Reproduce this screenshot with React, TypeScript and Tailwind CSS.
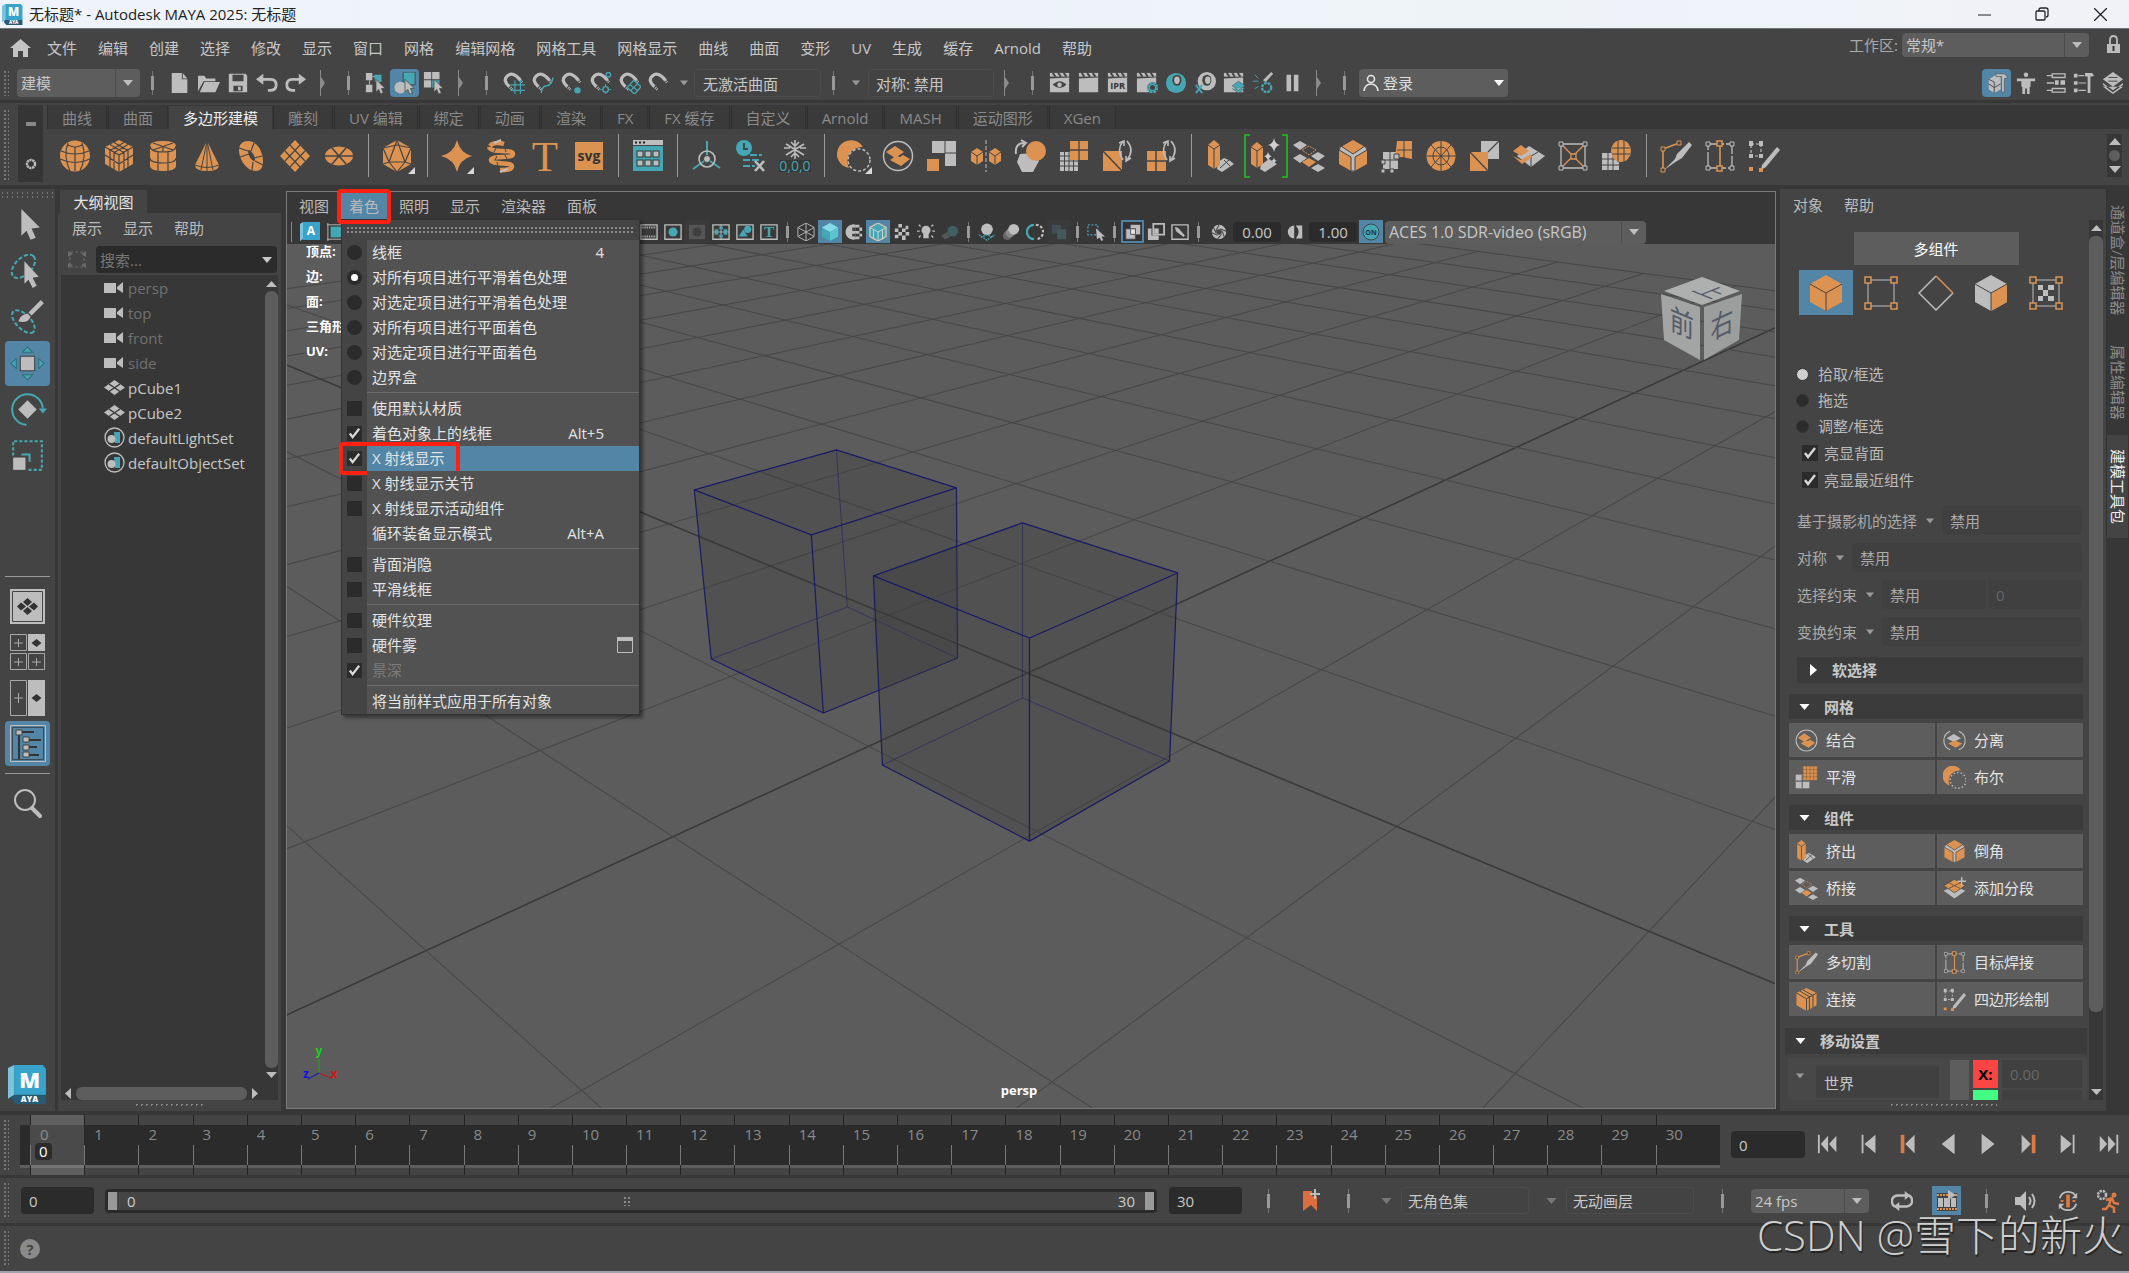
import { ReactNode, useState } from 'react';

const O = '#dc9352';
const G = '#bdbdbd';
const T = '#45a7b3';
const D = '#444444';

type IconProps = { children: ReactNode; size?: number; box?: number };

// Every icon is drawn on a square box and scaled to the wanted size
const Svg = ({ children, size = 32, box = 32 }: IconProps) => (
  <svg width={size} height={size} viewBox={`0 0 ${box} ${box}`} fill="none" className="block shrink-0">
    {children}
  </svg>
);

const MayaLogo = ({ size }: { size: number }) => (
  <Svg size={size} box={38}>
    <path d="M4 28h33v10H8l-4-4z" fill="#255b73" />
    <path d="M0 3l6-3v29l-6 4z" fill="#7cc4dd" />
    <path d="M6 0h28l3 4v25H6z" fill="#38a3cb" />
    <text x="21" y="22" fontSize="21" fontWeight="800" textAnchor="middle" fill="#fff">M</text>
    <text x="21" y="36" fontSize="8" fontWeight="800" textAnchor="middle" fill="#fff">AYA</text>
  </Svg>
);

/* ---------- shelf drawings ---------- */
const shapes = {
  sphere: (
    <>
      <ellipse cx="16" cy="16" rx="15" ry="15.500" fill={O} />
      <path d="M2 11q14 6 28 0M1 19q15 7 30 0M9 5q7 4 14 0M9 3q-5 13 2 28M23 3q5 13-2 28M16 7v24" stroke={D} strokeWidth="1.200" />
    </>
  ),
  cube: (
    <>
      <path d="M16 0l14 7v17l-14 8-14-8V7z" fill={O} />
      <path d="M2 7l14 8 14-8M16 15v17M7 4.500l14 8M11 2.500l14 8M25 4.500l-14 8M21 2.500l-14 8M7 10v17M11 12.500v17M21 12.500v17M25 10v17M2 15l14 9 14-9" stroke={D} strokeWidth="1.200" />
    </>
  ),
  cylinder: (
    <>
      <path d="M3 6q0-5 13-5t13 5v20q0 5-13 5T3 26z" fill={O} />
      <path d="M3 6q0 6 13 6t13-6M3 18q0 5 13 5t13-5M11 11v20M21 11v20M16 6v6M6 3l20 7M26 3L6 10" stroke={D} strokeWidth="1.200" />
    </>
  ),
  cone: (
    <>
      <path d="M16 1l12 24q0 6-12 6T4 25z" fill={O} />
      <path d="M16 1v30M4 25q12 5 24 0M16 1l-6 29M16 1l6 29" stroke={D} strokeWidth="1" />
    </>
  ),
  torus: (
    <>
      <path d="M13 1c9 0 15 10 15 21 0 6-3 9-7 9C12 31 4 20 4 10c0-6 4-9 9-9z" fill={O} />
      <path d="M13 10c3 0 7 5 7 10-1 3-7-2-7-10z" fill={D} />
      <path d="M4 8l9 3M19 3l-3 8M27 16l-8 2M28 25l-8-4M17 30l1-8M5 17l9-3" stroke={D} strokeWidth="1.200" />
    </>
  ),
  plane: (
    <>
      <path d="M16 0l15 16-15 16L1 16z" fill={O} />
      <path d="M6 11l15 16M11 5l15 16M26 11L11 27M21 5L6 21" stroke={D} strokeWidth="1.200" />
    </>
  ),
  disc: (
    <>
      <ellipse cx="16" cy="16" rx="14" ry="9.500" fill={O} />
      <path d="M2 16h28M9 8l14 16M23 8L9 24" stroke={D} strokeWidth="1.600" />
    </>
  ),
  platonic: (
    <>
      <path d="M15 0l14 8v16l-14 8L1 24V8z" fill={O} />
      <path d="M15 0L7 22h16zM1 8l6 14-6 2M29 8l-6 14 6 2M7 22l8 10 8-10M1 8L15 5l14 3" stroke={D} strokeWidth="1.200" />
      <path d="M33 27v7h-7z" fill="#d8d8d8" />
    </>
  ),
  superShape: (
    <>
      <path d="M16 0q3 13 15 16-12 3-15 16Q13 19 0 16 13 13 16 0z" fill={O} />
      <path d="M33 27v7h-7z" fill="#d8d8d8" />
    </>
  ),
  helix: (
    <>
      <path d="M5 6c2-3 8-4 14-2M4 7c2 7 24 1 24 7 0 5-22 1-22 6s21 2 21 6-6 4-12 4" stroke={O} strokeWidth="4.500" />
      <path d="M9 3l7-3M15 32l8-3" stroke={G} strokeWidth="2" />
      <path d="M11 8l-2 4M20 8l1 4M12 16l-2 4M20 15l2 4M12 22l1 4" stroke={D} />
    </>
  ),
  type: <text x="16" y="31" fontSize="43" textAnchor="middle" fill={O} className="font-['Liberation_Serif']">T</text>,
  svgTool: (
    <>
      <rect x="2" y="2" width="28" height="28" fill={O} />
      <text x="16" y="21" fontSize="14" fontWeight="700" textAnchor="middle" fill="#333">svg</text>
    </>
  ),
  contentBrowser: (
    <>
      <rect x="1" y="0" width="30" height="5" fill={G} />
      <path d="M3 2.500h2M7 2.500h2M11 2.500h2" stroke="#222" strokeWidth="2" />
      <rect x="1" y="6" width="30" height="25" fill={T} />
      {[5, 13, 21].map(x => [11, 20].map(y => <rect key={`${x}-${y}`} x={x} y={y} width="6" height="6" fill={G} stroke="#333" />))}
    </>
  ),
  pivot: (
    <>
      <path d="M16 1v14M16 19L2 29M16 19l13 9" stroke={T} strokeWidth="2" />
      <circle cx="16" cy="19" r="8" stroke={G} strokeWidth="1.600" />
      <circle cx="16" cy="19" r="3.500" fill={G} stroke={D} />
    </>
  ),
  history: (
    <>
      <circle cx="9" cy="8" r="8" fill={T} />
      <path d="M9 3v6h4" stroke={D} strokeWidth="2" />
      <path d="M15 15h12M8 20h18M8 26h12" stroke={T} strokeWidth="2" strokeDasharray="7 2" />
      <path d="M20 21l9 10M29 21l-9 10" stroke={G} strokeWidth="2.600" />
    </>
  ),
  freeze: (
    <>
      <path d="M0 20h32v12H0z" fill="#383838" />
      <path d="M16 0v19M7 4l18 11M25 4L7 15M12 2l4 4 4-4M12 17l4-4 4 4M5 8l6 0M27 8l-6 0" stroke={G} strokeWidth="1.600" />
      <text x="16" y="31" fontSize="14" textAnchor="middle" fill={T}>0,0,0</text>
    </>
  ),
  boolean: (
    <>
      <path d="M25 7A14 14 0 1 0 11 28C6 16 14 7 25 7z" fill={O} />
      <circle cx="21" cy="20" r="11" stroke={G} strokeWidth="1.500" strokeDasharray="3 2" />
      <path d="M34 27v7h-7z" fill="#d8d8d8" />
    </>
  ),
  booleanSmall: (
    <>
      <path d="M25 6A14 14 0 1 0 9 27C5 15 13 6 25 6z" fill={O} />
      <circle cx="21" cy="20" r="11" stroke={G} strokeWidth="2" strokeDasharray="2 3" />
    </>
  ),
  combine: (
    <>
      <circle cx="16" cy="16" r="14.500" stroke={G} strokeWidth="1.500" />
      <path d="M4 12l9-6 9 6-9 6zM8 20l6-4 4 1 3-2 7 4-9 7z" fill={O} />
    </>
  ),
  separate: (
    <>
      <path d="M10 3A14 14 0 0 0 10 29M22 3a14 14 0 0 1 0 26" stroke={G} strokeWidth="1.500" />
      <path d="M5 13l10-6 10 6-10 5z" fill={G} />
      <path d="M7 20l9-4 11 4-9 6z" fill={O} />
    </>
  ),
  extract: (
    <>
      <path d="M6 1h24v25H19V13H6z" fill={G} />
      <path d="M19 1v12h11" stroke={D} />
      <rect x="1" y="19" width="12" height="12" fill={O} />
    </>
  ),
  mirror: (
    <>
      <path d="M7 8l6 4v9l-6 4-6-4v-9zM25 8l6 4v9l-6 4-6-4v-9z" fill={O} />
      <path d="M1 12l6 4 6-4M7 16v9M19 12l6 4 6-4M25 16v9" stroke={D} />
      <path d="M16 0v32" stroke={G} strokeDasharray="4 2" />
    </>
  ),
  remesh: (
    <>
      <path d="M6 14l14-1 5 8-6 11H8L3 22z" fill={G} />
      <circle cx="22" cy="11" r="10" fill={O} />
      <path d="M2 14C1 7 4 3 10 3M7 0l5 3-4 4" stroke={G} strokeWidth="2" />
    </>
  ),
  smooth: (
    <>
      <path d="M2 12h18v19H2z" fill={G} />
      <path d="M6.500 12v19M11 12v19M15.500 12v19M2 16h18M2 21h18M2 26h18" stroke={D} />
      <path d="M12 1h18v19H12z" fill={O} />
      <path d="M21 1v19M12 10h18" stroke={D} strokeWidth="1.300" />
    </>
  ),
  smoothSmall: (
    <>
      <path d="M1 12h19v19H1z" fill={G} />
      <path d="M10 12v19M1 21h19" stroke="#5d5d5d" strokeWidth="1.500" />
      <path d="M11 0h20v20H11z" fill={O} stroke="#5d5d5d" />
      <path d="M16 0v20M21 0v20M26 0v20M11 5h20M11 10h20M11 15h20" stroke="#8a5a30" strokeWidth=".8" />
    </>
  ),
  triangulate: (
    <>
      <path d="M1 11h19v20H1z" fill={O} />
      <path d="M1 11l19 20" stroke={D} strokeWidth="1.500" />
      <path d="M21 1q-7 9 0 19M25 1q8 9 0 19M17 3l5-2v5M29 18l-5 3v-5" stroke={G} strokeWidth="1.600" />
    </>
  ),
  quadrangulate: (
    <>
      <path d="M1 11h19v20H1z" fill={O} />
      <path d="M10 11v20M1 21h19" stroke={D} strokeWidth="1.500" />
      <path d="M21 1q-7 9 0 19M25 1q8 9 0 19M17 3l5-2v5M29 18l-5 3v-5" stroke={G} strokeWidth="1.600" />
    </>
  ),
  extrude: (
    <>
      <path d="M13 22l6-4 5 2 5 4-12 8-5-3z" fill={G} />
      <path d="M19 20l6 6M24 20l-9 8" stroke={D} />
      <path d="M9 0l6 5v20l-6 4-6-4V5z" fill={O} />
      <path d="M3 5l6 4 6-4M9 9v20" stroke={D} />
    </>
  ),
  smartExtrude: (
    <>
      <path d="M1-5h-5v42h5M33-5h5v42h-5" stroke="#20c020" strokeWidth="1.600" />
      <path d="M12 25l8-6 8 5-12 8-5-3z" fill={G} />
      <path d="M8 2l6 5v17l-6 4-6-4V7z" fill={O} />
      <path d="M2 7l6 4 6-4M8 11v17" stroke={D} />
      <path d="M25-2q1 6 6 7-5 1-6 7-1-6-6-7 5-1 6-7zM19 12q1 4 4 4-3 1-4 5-1-4-4-5 3 0 4-4zM25 17q0 3 3 4-3 0-3 4 0-4-3-4 3-1 3-4z" fill="#d0d0d0" />
    </>
  ),
  bridge: (
    <>
      <path d="M0 5l7-4 7 4-7 5zM0 18l7-4 7 4-7 5zM18 16l7-4 7 4-7 5zM18 28l7-4 7 4-7 4z" fill={G} />
      <path d="M9 22l7-4 7 4-7 5z" fill={O} />
      <path d="M9 10l7-4 7 4-7 5z" stroke={O} strokeDasharray="2 1" />
    </>
  ),
  bevel: (
    <>
      <path d="M16 0l14 8v16l-14 8-14-8V8z" fill={O} />
      <path d="M2 10l2-4 12 8 12-8 2 4-12 7v14h-4V17z" fill={G} stroke={D} />
    </>
  ),
  deformer: (
    <>
      <path d="M2 12h15v17H2z" fill={G} />
      <path d="M16 1h15v18l-10-2-7 1z" fill={O} />
      <path d="M2 20h15M9 12v17M23 1v17M16 10h15" stroke={D} />
      <path d="M0 20h4v4H0zM0 29h4v4H0zM9 29h4v4H9zM13 14h5v5h-5z" stroke={D} fill={G} />
    </>
  ),
  circularize: (
    <>
      <ellipse cx="16" cy="16" rx="14.500" ry="15" fill={O} />
      <ellipse cx="16" cy="16" rx="8" ry="9" stroke={D} />
      <path d="M16 1v30M1.500 16h29M6 5l20 22M26 5L6 27" stroke={D} />
    </>
  ),
  fill: (
    <>
      <path d="M12 1h18v18H12z" fill={G} />
      <path d="M1 12h18v19H1z" fill={O} />
      <path d="M1 12l18 19M19 12L30 1" stroke={D} strokeWidth="1.300" />
    </>
  ),
  poke: (
    <>
      <path d="M16 6l16 10-14 11L4 16z" fill={G} />
      <path d="M10 21l15-9M18 27V17" stroke={D} />
      <path d="M0 11l8-6 8 6-8 5zM0 16l8 4 10-6v4l-9 6z" fill={O} />
    </>
  ),
  lattice: (
    <>
      <path d="M4 4h24v24H4z" stroke={G} strokeWidth="1.300" />
      <path d="M5 5l22 22M27 5L5 27" stroke={O} strokeWidth="1.300" />
      <path d="M14 14h5v5h-5z" fill={D} stroke={O} strokeWidth="1.300" />
      <path d="M2 2h4v4H2zM26 2h4v4h-4zM2 26h4v4H2zM26 26h4v4h-4z" fill={D} stroke={G} />
    </>
  ),
  shrinkwrap: (
    <>
      <path d="M1 13h17v17H1z" fill={G} />
      <path d="M7 13v17M12 13v17M1 19h17M1 25h17" stroke={D} />
      <ellipse cx="20" cy="11" rx="10" ry="11" fill={O} />
      <path d="M11 8h18M11 14h18M17 0v22M23 0v22" stroke={D} />
    </>
  ),
  multiCut: (
    <>
      <path d="M3 29V9L19 3" stroke={O} strokeWidth="1.600" />
      <path d="M1 7h4v4H1zM17 1h4v4h-4zM1 28h4v4H1z" fill={D} stroke={O} />
      <path d="M29 2l3 3-10 13-5 3-2-2 2-5zM15 19l2 2L4 30z" fill={G} />
    </>
  ),
  targetWeld: (
    <>
      <path d="M4 4h24v24H4z" stroke={G} strokeWidth="1.300" strokeDasharray="16 2" />
      <path d="M16 4v24" stroke={O} strokeWidth="1.600" />
      <path d="M13 1h5v5h-5zM13 26h5v5h-5z" fill={D} stroke={O} strokeWidth="1.500" />
      <path d="M2 2h4v4H2zM26 2h4v4h-4zM2 26h4v4H2zM26 26h4v4h-4z" fill={D} stroke={G} />
    </>
  ),
  quadDraw: (
    <>
      <path d="M3 4h10v12H3z" stroke={G} strokeWidth="1.200" strokeDasharray="3 2" />
      <path d="M1 1h4v5H1zM11 1h4v5h-4zM1 14h4v4H1zM11 14h4v4h-4z" fill={G} />
      <path d="M29 7l3 3-14 17-5 3 1-5z" fill={G} />
      <path d="M1 27h4v4H1zM11 28h4v4h-4z" fill={O} />
    </>
  ),
  addDivision: (
    <>
      <path d="M1 19l15-7 15 7-15 11z" fill={G} />
      <path d="M1 12l15-9 15 9-15 10z" fill={O} stroke={D} />
      <path d="M8 8l16 8M24 8L8 16" stroke={D} />
      <path d="M26 0v12M20 6h12" stroke={G} strokeWidth="2" />
    </>
  ),
  connect: (
    <>
      <path d="M16 0l14 7v17l-14 8-14-8V7z" fill={O} />
      <path d="M2 7l14 8 14-8M16 15v17M20 13v17M25 10v17M7 4.500l14 8M11 2.500l14 8" stroke={D} strokeWidth="1.300" />
    </>
  ),
};

type ShapeName = keyof typeof shapes;

const shelfGroups: ShapeName[][] = [
  ['sphere', 'cube', 'cylinder', 'cone', 'torus', 'plane', 'disc'],
  ['platonic'],
  ['superShape', 'helix', 'type', 'svgTool'],
  ['contentBrowser'],
  ['pivot', 'history', 'freeze'],
  ['boolean', 'combine', 'extract', 'mirror', 'remesh', 'smooth', 'triangulate', 'quadrangulate'],
  ['extrude', 'smartExtrude', 'bridge', 'bevel', 'deformer', 'circularize', 'fill', 'poke', 'lattice', 'shrinkwrap'],
  ['multiCut', 'targetWeld', 'quadDraw'],
];

/* ---------- small pieces ---------- */
const Grip = () => (
  <div className="w-[6px] shrink-0 self-stretch my-1 ml-[3px] bg-[radial-gradient(#777_1px,transparent_1px)] bg-[size:4px_4px]" />
);

const Sep = () => (
  <span className="relative mx-[12px] h-6 w-px shrink-0 bg-[#777] before:absolute before:-left-px before:top-[5px] before:h-[14px] before:w-[3px] before:bg-[#999]" />
);

const Chevron = () => (
  <svg width="6" height="26" viewBox="0 0 6 26" className="mx-[10px] shrink-0"><path d="M0 0h1v7l4 6-4 6v7H0z" fill="#8a8a8a" /></svg>
);

const Down = ({ color = '#bdbdbd', w = 10 }: { color?: string; w?: number }) => (
  <svg width={w} height="6" viewBox="0 0 10 6" className="shrink-0"><path d="M0 0h10L5 6z" fill={color} /></svg>
);

const ToolBtn = ({ label, active, children }: { label: string; active?: boolean; children: ReactNode }) => (
  <button
    aria-label={label}
    className={`flex h-7 w-[29px] shrink-0 items-center justify-center rounded-sm ${active ? 'bg-[#5285a6]' : ''}`}
  >
    <Svg size={22} box={24}>{children}</Svg>
  </button>
);

const Select = ({ label, value, className }: { label: string; value: string; className: string }) => (
  <div className={`relative shrink-0 ${className}`}>
    <select aria-label={label} className="h-full w-full appearance-none rounded-sm bg-[#5d5d5d] pl-1 leading-5 text-[#c8c8c8] outline-none">
      <option>{value}</option>
    </select>
    <span className="pointer-events-none absolute inset-y-0 right-0 flex w-[25px] items-center justify-center border-l border-[#4c4c4c]"><Down /></span>
  </div>
);

const Tick = () => (
  <svg viewBox="0 0 16 16" className="pointer-events-none absolute inset-0 hidden size-full peer-checked:block"><path d="M3 8l3 4 7-9" stroke="#d8d8d8" strokeWidth="2.400" fill="none" /></svg>
);

/* ---------- title and menus ---------- */
const TitleBar = () => (
  <header className="flex h-[29px] shrink-0 items-center border-b border-[#70757a] bg-linear-to-r from-[#eff3fb] via-[#edf4f8] to-[#f1f2f8] pl-[2px] text-[#222]">
    <MayaLogo size={21} />
    <h1 className="ml-[6px] flex-1 leading-5">无标题* - Autodesk MAYA 2025: 无标题</h1>
    <button aria-label="最小化" className="flex h-7 w-[58px] items-center justify-center"><svg width="13" height="13" stroke="#222"><path d="M0 7h13" /></svg></button>
    <button aria-label="还原" className="flex h-7 w-[58px] items-center justify-center">
      <svg width="14" height="14" fill="none" stroke="#222" strokeWidth="1.300"><rect x="1" y="4" width="9" height="9" rx="1" /><path d="M4 4V3q0-2 2-2h5q2 0 2 2v5q0 2-2 2" /></svg>
    </button>
    <button aria-label="关闭" className="flex h-7 w-[58px] items-center justify-center"><svg width="13" height="13" stroke="#222" strokeWidth="1.300"><path d="M0 0l13 13M13 0L0 13" /></svg></button>
  </header>
);

const mainMenus = ['文件', '编辑', '创建', '选择', '修改', '显示', '窗口', '网格', '编辑网格', '网格工具', '网格显示', '曲线', '曲面', '变形', 'UV', '生成', '缓存', 'Arnold', '帮助'];

const MenuBar = () => (
  <nav className="flex h-[37px] shrink-0 items-center">
    <a href="#home" aria-label="主页" className="ml-[10px] mr-4">
      <svg width="21" height="18" viewBox="0 0 21 18"><path d="M10.500 0L21 9h-3v9h-5v-6H8v6H3V9H0z" fill="#c4c4c4" /></svg>
    </a>
    <div className="flex flex-1 gap-[21px]">
      {mainMenus.map(m => <button key={m}>{m}</button>)}
    </div>
    <span className="mb-[6px] mr-1 text-[#aaa]">工作区:</span>
    <Select label="工作区" value="常规*" className="mb-[6px] h-6 w-[187px]" />
    <button aria-label="锁定" className="mb-[6px] ml-[18px] mr-[9px]">
      <svg width="13" height="19" viewBox="0 0 13 19"><path d="M3 9V5q0-4 3.500-4T10 5v4" stroke={G} strokeWidth="1.800" fill="none" /><rect y="9" width="13" height="9" fill={G} /><path d="M6.500 11v5" stroke="#333" strokeWidth="2" /></svg>
    </button>
  </nav>
);

// Horseshoe magnet tilted to the left, with its two tips
const magnet = (
  <>
    <path d="M7 16Q-1 9 5 4t14 5" stroke={G} strokeWidth="3.600" />
    <path d="M8 17l3 3M19 9l2 3" stroke={G} strokeWidth="3" strokeDasharray="1 1" />
  </>
);
const clap = <><path d="M1 7l21-1v16H1z" fill={G} /><path d="M1 5V1h21v4z" fill={G} /><path d="M4 1l3 4M10 1l3 4M16 1l3 4" stroke={D} strokeWidth="2" /></>;
const pointer = <path d="M12 8l10 10h-4l2 5-3 1-2-5-3 3z" fill={G} stroke={D} strokeWidth=".8" />;

const StatusLine = () => (
  <div className="flex h-[34px] shrink-0 items-center">
    <Grip />
    <Select label="菜单集" value="建模" className="ml-2 h-7 w-[123px]" />
    <Sep />
    <ToolBtn label="新建场景"><path d="M3 1h11v7h6v15H3z" fill={G} /><path d="M15 1l5 6h-5z" fill={G} /></ToolBtn>
    <ToolBtn label="打开场景"><path d="M0 21V4h7l2 3h10v3H6z" fill={G} /><path d="M7 11h17l-5 11H2z" fill={G} /></ToolBtn>
    <ToolBtn label="保存场景"><path d="M2 2h18l2 2v18H2z" fill={G} /><path d="M6 3h12v7H6zM7 15h10v6H7z" fill={D} /><path d="M12 16h3v4h-3z" fill={G} /></ToolBtn>
    <ToolBtn label="撤消"><path d="M6 8h10q6 0 6 6t-6 6h-3" stroke={G} strokeWidth="3" /><path d="M0 8l8-6v12z" fill={G} /></ToolBtn>
    <ToolBtn label="重做"><path d="M17 8H8q-6 0-6 6t6 6h3" stroke={G} strokeWidth="3" /><path d="M23 8l-8-6v12z" fill={G} /></ToolBtn>
    <Chevron />
    <Sep />
    <ToolBtn label="按层次选择"><path d="M1 1h7v8H1zM1 14h7v8H1z" fill={G} /><path d="M5 9v5M8 5h3" stroke={G} /><path d="M10 3h8v8h-7z" fill={T} />{pointer}</ToolBtn>
    <ToolBtn label="按对象类型选择" active><path d="M10 0h13v14H10z" fill={T} stroke={D} /><circle cx="7" cy="17" r="6.500" fill={G} />{pointer}</ToolBtn>
    <ToolBtn label="按组件类型选择"><path d="M1 0h8v8H1zM10 0h8v8h-8zM1 9h8v8H1z" fill={G} /><path d="M10 9h8v8h-8z" fill={T} />{pointer}</ToolBtn>
    <Chevron />
    <Sep />
    <ToolBtn label="捕捉到栅格">{magnet}<path d="M8 14h16M8 20h16M13 9v15M19 9v15" stroke={T} strokeWidth="1.300" /></ToolBtn>
    <ToolBtn label="捕捉到曲线">{magnet}<path d="M10 23q1-8 6-8t7-9" stroke={T} strokeWidth="1.600" /></ToolBtn>
    <ToolBtn label="捕捉到点">{magnet}<circle cx="18" cy="20" r="3.500" fill={T} /></ToolBtn>
    <ToolBtn label="捕捉到投影中心">{magnet}<circle cx="17" cy="19" r="3" stroke={T} strokeWidth="1.500" /><circle cx="20" cy="3" r="2.500" stroke={T} strokeWidth="1.500" /><path d="M11 19h3M20 19h3M17 13v3M17 22v2" stroke={T} /></ToolBtn>
    <ToolBtn label="捕捉到视图平面">{magnet}<path d="M9 17l7-8 8 7-7 8zM12 14l8 6M20 13l-7 7" stroke={T} strokeWidth="1.400" /></ToolBtn>
    <ToolBtn label="激活选定对象">{magnet}</ToolBtn>
    <span className="flex w-[21px] justify-center"><Down w={8} color="#999" /></span>
    <input aria-label="激活曲面" readOnly value="无激活曲面" className="h-7 w-[127px] shrink-0 rounded-sm border border-[#4c4c4c] bg-[#434343] px-2 outline-none" />
    <Sep />
    <span className="ml-1 mr-[6px] flex w-3 justify-center"><Down w={8} color="#999" /></span>
    <input aria-label="对称" readOnly value="对称: 禁用" className="h-7 w-[126px] shrink-0 rounded-sm border border-[#4c4c4c] bg-[#434343] px-[7px] outline-none" />
    <Chevron />
    <Sep />
    <ToolBtn label="渲染视图">{clap}<path d="M4 14q8-8 15 0-7 7-15 0z" fill={D} /><circle cx="11.500" cy="14" r="2.500" fill={G} /></ToolBtn>
    <ToolBtn label="渲染当前帧">{clap}</ToolBtn>
    <ToolBtn label="IPR 渲染">{clap}<text x="11.500" y="18" fontSize="10" fontWeight="700" textAnchor="middle" fill="#333">IPR</text></ToolBtn>
    <ToolBtn label="渲染设置">{clap}<circle cx="18" cy="17" r="5.500" fill={D} /><circle cx="18" cy="17" r="5" stroke={T} strokeWidth="2.500" strokeDasharray="2.600 1.300" /><circle cx="18" cy="17" r="3.500" stroke={T} strokeWidth="1.500" /></ToolBtn>
    <ToolBtn label="Hypershade"><circle cx="12" cy="12" r="11" fill={T} /><ellipse cx="13" cy="9" rx="5" ry="6" fill={D} /><ellipse cx="13" cy="9" rx="3" ry="4" fill={G} /></ToolBtn>
    <ToolBtn label="渲染设置编辑器"><circle cx="14" cy="10" r="10" fill={G} /><ellipse cx="14" cy="9" rx="5" ry="6" fill={D} /><ellipse cx="15" cy="9" rx="3" ry="4" fill={G} /><path d="M2 14l7 9M9 14l-7 9" stroke={T} strokeWidth="2" /></ToolBtn>
    <ToolBtn label="渲染层">{clap}<path d="M10 15l7-5 7 5-7 5zM10 18l7 5 7-5" fill={T} stroke={D} strokeWidth=".5" /></ToolBtn>
    <ToolBtn label="灯光编辑器"><circle cx="16" cy="17" r="5" stroke={T} strokeWidth="2.500" strokeDasharray="3 1" /><path d="M1 10h6M3 18l4-2M3 3l4 4" stroke={T} /><path d="M21 0l2 2-8 9-3-2z" fill={G} /></ToolBtn>
    <ToolBtn label="暂停"><path d="M6 3h5v18H6zM14 3h5v18h-5z" fill={G} /></ToolBtn>
    <Chevron />
    <Sep />
    <button className="ml-[2px] flex h-7 w-[149px] shrink-0 items-center rounded-sm bg-[#5d5d5d] px-1 text-[#e0e0e0]">
      <svg width="16" height="18" viewBox="0 0 16 18" fill="none" stroke="#e6e6e6" strokeWidth="1.600"><circle cx="8" cy="5" r="3.500" /><path d="M1 17q1-7 7-7t7 7" /></svg>
      <span className="ml-1 flex-1 text-left">登录</span>
      <Down color="#fff" />
    </button>
    <div className="ml-auto mr-[2px] flex">
      <ToolBtn label="建模工具包" active><path d="M3 8l8-5 5 3v13l-7 4-6-4z" fill={G} /><path d="M3 13l6 4 7-4M9 11v12M3 8l6 3" stroke={D} /><path d="M11 2h9l3 3v2h-3v15h-3V5h-6z" fill={G} stroke={D} strokeWidth=".6" /></ToolBtn>
      <ToolBtn label="角色控制"><circle cx="12" cy="3" r="2.500" fill={G} /><path d="M2 7h20v3h-5v6h-1v8h-3v-6h-2v6H8v-8H7v-6H2z" fill={G} /></ToolBtn>
      <ToolBtn label="通道盒"><path d="M9 2h14v4H9zM9 18h14v4H9z" stroke={G} strokeWidth="1.400" /><path d="M3 4h6M3 12h8M3 20h6" stroke={G} strokeWidth="1.400" /><path d="M12 9h4v5h-4zM18 9h5v5h-5z" fill={G} /></ToolBtn>
      <ToolBtn label="属性编辑器"><path d="M1 2h4v4H1zM1 10h4v4H1zM1 18h4v4H1zM13 1h8l2 3-2 1h-2v18h-3V5h-3z" fill={G} /><path d="M6 4h6M6 12h8M6 20h8" stroke={G} strokeWidth="1.300" /></ToolBtn>
      <ToolBtn label="层编辑器"><path d="M12 0l11 8-11 8L1 8zM1 12l11 8 11-8v2l-11 8-11-8zM1 16l11 8 11-8" fill={G} /><path d="M7 6h10M7 10h10" stroke={D} /></ToolBtn>
    </div>
  </div>
);

const shelfTabs = ['曲线', '曲面', '多边形建模', '雕刻', 'UV 编辑', '绑定', '动画', '渲染', 'FX', 'FX 缓存', '自定义', 'Arnold', 'MASH', '运动图形', 'XGen'];

const Shelf = () => {
  const [tab, setTab] = useState('多边形建模');
  return (
    <section className="flex h-[89px] shrink-0 border-t-[3px] border-b-4 border-[#373737] pt-[2px]">
      <Grip />
      <div className="ml-[9px] mb-[3px] flex w-[25px] shrink-0 flex-col items-center bg-[#353535]">
        <button aria-label="工具架标签" className="mt-[17px] h-1 w-[10px] bg-[#888]" />
        <button aria-label="工具架设置" className="mt-[32px]"><Svg size={12} box={12}><circle cx="6" cy="6" r="4" stroke={G} strokeWidth="2.500" strokeDasharray="2.200 .6" /></Svg></button>
      </div>
      <div className="ml-1 min-w-0 flex-1">
        <div className="flex h-6 items-end gap-px bg-[#373737] pr-4">
          {shelfTabs.map(t => (
            <button
              key={t}
              onClick={() => setTab(t)}
              className={`h-[23px] px-[14px] ${t === tab ? 'bg-[#444] text-[#eee]' : 'border-x border-[#303030] bg-[#3a3a3a] text-[#8a8a8a]'}`}
            >
              {t}
            </button>
          ))}
        </div>
        <div className="flex h-[53px] items-center pl-[6px]">
          {shelfGroups.map((group, i) => (
            <div key={i} className="flex items-center">
              {i > 0 && <span className="mx-[7px] h-[43px] w-px bg-[#999]" />}
              {group.map(name => (
                <button key={name} aria-label={name} className="flex h-11 w-[44px] items-center justify-center [&>svg]:overflow-visible">
                  <Svg>{shapes[name]}</Svg>
                </button>
              ))}
            </div>
          ))}
          <div className="ml-auto mr-[7px] flex h-[43px] w-[15px] flex-col items-center justify-between bg-[#373737] py-1">
            <svg width="12" height="7"><path d="M0 7h12L6 0z" fill={G} /></svg>
            <span className="size-[11px] rounded-full bg-[#5d5d5d]" />
            <svg width="12" height="7"><path d="M0 0h12L6 7z" fill={G} /></svg>
          </div>
        </div>
      </div>
    </section>
  );
};

/* ---------- left side ---------- */
const arrowPath = <path d="M14 4l18 18-8 1 4 9-5 2-4-9-5 5z" fill={G} />;

const ToolBox = () => (
  <aside className="flex w-[55px] shrink-0 flex-col items-center">
    <div className="mt-[2px] h-[8px] w-full bg-[radial-gradient(#777_1px,transparent_1px)] bg-[size:5px_4px]" />
    <div className="mt-1 flex flex-col gap-px">
      <button aria-label="选择" className="p-[2px]"><Svg size={41} box={40}>{arrowPath}</Svg></button>
      <button aria-label="套索" className="p-[2px]"><Svg size={41} box={40}><ellipse cx="16" cy="15" rx="14" ry="8" stroke={T} strokeWidth="2" strokeDasharray="4 2" transform="rotate(-45 16 15)" /><path d="M17 10l14 15-6 1 4 8-4 2-4-8-4 4z" fill={G} /></Svg></button>
      <button aria-label="绘制选择" className="p-[2px]"><Svg size={41} box={40}><ellipse cx="16" cy="24" rx="14" ry="7" stroke={T} strokeWidth="2" strokeDasharray="4 2" transform="rotate(45 16 24)" /><path d="M33 3l3 3-12 12-3-3zM20 16l3 3q-2 7-12 5 2-7 9-8z" fill={G} /></Svg></button>
      <button aria-label="移动" className="rounded-sm bg-[#5285a6] p-[2px]"><Svg size={41} box={40}><path d="M13 13h14v14H13z" fill={G} stroke={D} /><path d="M20 4l5 5H15zM20 36l5-5H15zM4 20l5-5v10zM36 20l-5-5v10z" fill={T} stroke="#2e6f7a" /></Svg></button>
      <button aria-label="旋转" className="p-[2px]"><Svg size={41} box={40}><path d="M19 35A15 15 0 1 1 35 19" stroke={T} strokeWidth="2" /><path d="M20 11l9 9-9 9-9-9z" fill={G} /><path d="M31 19h8l-4 5z" fill={T} /></Svg></button>
      <button aria-label="缩放" className="p-[2px]"><Svg size={41} box={40}><path d="M6 20V6h28v28H20" stroke={T} strokeWidth="2" strokeDasharray="3 2" /><path d="M14 19h8v7" stroke={T} strokeWidth="2" /><path d="M6 22h12v12H6z" fill={G} /></Svg></button>
    </div>
    <hr className="mt-[98px] w-[45px] border-[#999]" />
    <div className="flex flex-col">
      <button aria-label="单个透视图" className="mt-[12px]"><svg width="35" height="35" viewBox="0 0 35 35"><path d="M0 0h35v35H0z" fill={G} /><path d="M2.500 2.500h30v30h-30z" stroke={D} fill="none" /><path d="M17.500 9l4.500 4-4.500 4-4.500-4zM17.500 18l4.500 4-4.500 4-4.500-4zM11 13.500l5 4-5 4-4-4zM24 13.500l4 4-4 4-5-4z" fill="#333" /></svg></button>
      <button aria-label="四视图" className="mt-[10px]"><svg width="35" height="36" fill="none"><path d="M.5.500h16v16H.5zM.5 19.500h16v16H.5zM18.500 19.500h16v16h-16zM8.500 5v8M4 9h9M8.500 24v8M4 28h9M26.500 24v8M22 28h9" stroke="#a8a8a8" /><path d="M18 0h17v17H18z" fill={G} /><path d="M26.500 5l5 4-5 4-5-4z" fill="#333" /></svg></button>
      <button aria-label="并排视图" className="mt-[10px]"><svg width="35" height="36" fill="none"><path d="M.5.500h16v35H.5zM8.500 13v10M4 18h9" stroke="#a8a8a8" /><path d="M18 0h17v36H18z" fill={G} /><path d="M26.500 14l5 4-5 4-5-4z" fill="#333" /></svg></button>
    </div>
    <button aria-label="大纲视图布局" className="mt-[5px] flex h-[45px] w-[45px] items-center justify-center rounded-sm bg-[#5285a6]">
      <svg width="36" height="37" fill="none"><path d="M.5.500h35v36H.5z" stroke={G} /><path d="M2.500 2.500h31v32h-31z" stroke="#3c4a55" /><path d="M9 8v26M12 7h12M17 15h14M17 22h10M17 30h12" stroke="#333" strokeWidth="2" /><path d="M6 5h6v5H6zM13 12h6v5h-6zM13 20h6v5h-6zM13 27h6v5h-6z" fill={G} stroke="#444" /></svg>
    </button>
    <hr className="mt-[7px] w-[45px] border-[#999]" />
    <button aria-label="搜索" className="mt-[15px]"><svg width="28" height="30" fill="none" stroke={G}><circle cx="11" cy="11" r="10" strokeWidth="2" /><path d="M18 19l8 8" strokeWidth="4" strokeLinecap="round" /></svg></button>
    <button aria-label="Maya" className="mt-auto mb-[7px]"><MayaLogo size={39} /></button>
  </aside>
);

const cameras = ['persp', 'top', 'front', 'side'];

const Outliner = () => (
  <aside className="flex w-[229px] shrink-0 flex-col border-x-[3px] border-[#373737] bg-[#444]">
    <div className="flex h-6 items-end bg-[#373737]">
      <button className="ml-[2px] h-[23px] w-[87px] bg-[#444] text-[#e4e4e4]">大纲视图</button>
    </div>
    <div className="flex h-[30px] items-center gap-[21px] pl-[14px] text-[#bbb]">
      <button>展示</button><button>显示</button><button>帮助</button>
    </div>
    <div className="mt-[3px] flex h-[27px] items-center pl-[10px] pr-1">
      <svg width="18" height="19" fill="none" stroke="#6b6b6b"><path d="M2 2h14v15H2z" strokeDasharray="3 2" /><path d="M0 1l5 3-5 3zM18 1l-5 3 5 3zM0 13l5 2-5 3zM18 13l-5 2 5 3z" fill="#6b6b6b" stroke="none" /></svg>
      <div className="relative ml-[10px] h-full flex-1">
        <input aria-label="搜索" placeholder="搜索..." className="h-full w-full rounded-sm bg-[#2b2b2b] pl-1 outline-none placeholder:text-[#777]" />
        <span className="pointer-events-none absolute inset-y-0 right-1 flex items-center"><Down w={12} color="#c8c8c8" /></span>
      </div>
    </div>
    <div className="mx-[3px] mt-[2px] flex min-h-0 flex-1 bg-[#373737]">
      <ul className="flex-1 pl-[43px]">
        {cameras.map(c => (
          <li key={c} className="flex h-[25px] items-center text-[#717171]">
            <svg width="20" height="12" className="mr-1"><path d="M0 1h12v10H0zM13 5l6-5v11l-6-4z" fill={G} /></svg>{c}
          </li>
        ))}
        {['pCube1', 'pCube2'].map(c => (
          <li key={c} className="flex h-[25px] items-center">
            <svg width="21" height="15" viewBox="0 0 21 15" className="mr-[3px]"><path d="M10.500 0L21 7.500 10.500 15 0 7.500z" fill={G} /><path d="M5 4l11 7.500M16 4L5 11.500" stroke="#373737" strokeWidth="1.500" /></svg>{c}
          </li>
        ))}
        {['defaultLightSet', 'defaultObjectSet'].map(c => (
          <li key={c} className="flex h-[25px] items-center">
            <svg width="21" height="21" fill="none" className="mr-[3px]"><circle cx="10.500" cy="10.500" r="9.500" stroke={G} strokeWidth="1.300" /><path d="M10 5h6v11h-5z" fill={T} /><circle cx="7.500" cy="12" r="4" fill={G} /></svg>{c}
          </li>
        ))}
      </ul>
      <div className="flex w-[13px] flex-col items-center gap-1 pt-[6px] pb-2">
        <svg width="11" height="6"><path d="M0 6h11L5.500 0z" fill={G} /></svg>
        <span className="w-full flex-1 rounded-md bg-[#5d5d5d]" />
        <svg width="11" height="6"><path d="M0 0h11L5.500 6z" fill={G} /></svg>
      </div>
    </div>
    <div className="mx-[3px] flex h-[14px] items-center gap-[5px] bg-[#373737] pl-1 pr-5">
      <svg width="6" height="11"><path d="M6 0v11L0 5.500z" fill={G} /></svg>
      <span className="h-[13px] flex-1 rounded-md bg-[#5d5d5d]" />
      <svg width="6" height="11"><path d="M0 0v11l6-5.500z" fill={G} /></svg>
    </div>
    <div className="mx-auto mb-1 mt-[2px] h-[5px] w-[72px] bg-[radial-gradient(#888_1px,transparent_1px)] bg-[size:5px_5px]" />
  </aside>
);

/* ---------- viewport ---------- */
const CAM = { f: 1446, dist: 6.92, sin: 0.438, cos: 0.899, cx: 740, cy: 428 };
const depthOf = (a: number, b: number) => CAM.dist + CAM.cos * (0.725 * a + 0.688 * b);

const project = (a: number, b: number) => {
  const right = 0.688 * a - 0.725 * b;
  const away = 0.725 * a + 0.688 * b;
  const d = CAM.dist + CAM.cos * away;
  return [CAM.cx + (CAM.f * right) / d, CAM.cy - (CAM.f * CAM.sin * away) / d];
};

// A grid line runs to +12 and is cut just before the camera plane
const gridLine = (i: number, alongA: boolean) => {
  let start = -12;
  while (depthOf(alongA ? start : i, alongA ? i : start) < 1 && start < 12) start += 0.1;
  if (start >= 12) return null;
  const [x1, y1] = alongA ? project(start, i) : project(i, start);
  const [x2, y2] = alongA ? project(12, i) : project(i, 12);
  return (
    <line key={`${i}${alongA}`} x1={x1} y1={y1} x2={x2} y2={y2} stroke={i === 0 ? '#3a3a3a' : '#474747'} strokeWidth={i === 0 ? 1.6 : 1} />
  );
};

const steps = Array.from({ length: 25 }, (_, i) => i - 12);

const Scene = () => (
  <svg viewBox="0 -1 1487 864" preserveAspectRatio="xMidYMid slice" className="absolute inset-0 size-full">
    {steps.map(i => gridLine(i, true))}
    {steps.map(i => gridLine(i, false))}
    <g stroke="#1a1a66" strokeWidth="1.200" strokeLinejoin="round">
      <path d="M549 205l120 38 1 170-134 55-112-54-17-169z" fill="#3c3c3c" fillOpacity=".35" />
      <path d="M407 245l117 45 145-47M524 290l12 178" fill="none" />
      <path d="M549 205l11 157 110 51M560 362l-136 52" fill="none" strokeWidth=".5" />
      <path d="M735 278l155 50-8 188-140 80-147-76-9-189z" fill="#3c3c3c" fillOpacity=".35" />
      <path d="M586 331l156 62 148-65M742 393v203" fill="none" />
      <path d="M735 278v175l147 63M735 453l-140 67" fill="none" strokeWidth=".5" />
    </g>
  </svg>
);

const ViewCube = () => (
  <svg width="82" height="84" viewBox="0 0 82 84" className="absolute right-[32px] top-[33px]">
    <path d="M41 0l38 14-38 14L3 14z" fill="#aeb0b0" />
    <path d="M0 17l39 13v53L3 63z" fill="#a3a4a4" />
    <path d="M43 30l38-13-3 46-35 20z" fill="#9c9d9d" />
    <text transform="matrix(.85 .34 -.85 .34 41 18)" fontSize="26" textAnchor="middle" fill="#555b66">上</text>
    <text transform="matrix(.9 .38 0 1.100 21 57)" fontSize="27" textAnchor="middle" fill="#555b66">前</text>
    <text transform="matrix(.85 -.4 0 1.100 61 58)" fontSize="27" textAnchor="middle" fill="#555b66">右</text>
  </svg>
);

type Entry = { text: string; kind?: 'radio' | 'check'; on?: boolean; key?: string; active?: boolean; off?: boolean; box?: boolean };

const shadingMenu: Entry[][] = [
  [
    { text: '线框', kind: 'radio', key: '4' },
    { text: '对所有项目进行平滑着色处理', kind: 'radio', on: true },
    { text: '对选定项目进行平滑着色处理', kind: 'radio' },
    { text: '对所有项目进行平面着色', kind: 'radio' },
    { text: '对选定项目进行平面着色', kind: 'radio' },
    { text: '边界盒', kind: 'radio' },
  ],
  [
    { text: '使用默认材质', kind: 'check' },
    { text: '着色对象上的线框', kind: 'check', on: true, key: 'Alt+5' },
    { text: 'X 射线显示', kind: 'check', on: true, active: true },
    { text: 'X 射线显示关节', kind: 'check' },
    { text: 'X 射线显示活动组件', kind: 'check' },
    { text: '循环装备显示模式', key: 'Alt+A' },
  ],
  [{ text: '背面消隐', kind: 'check' }, { text: '平滑线框', kind: 'check' }],
  [
    { text: '硬件纹理', kind: 'check' },
    { text: '硬件雾', kind: 'check', box: true },
    { text: '景深', kind: 'check', on: true, off: true },
  ],
  [{ text: '将当前样式应用于所有对象' }],
];

const ShadingMenu = () => (
  <div className="absolute left-0 top-full z-20 w-[299px] border border-[#333] bg-[#444] text-left text-[#e4e4e4] shadow-[3px_3px_3px_rgba(0,0,0,.4)]">
    <div className="mx-1 my-[6px] h-[8px] bg-[radial-gradient(#888_1px,transparent_1px)] bg-[size:4px_4px]" />
    {shadingMenu.map((group, g) => (
      <div key={g}>
        {g > 0 && <div className="ml-[25px] flex h-[6px] items-center bg-[#525252]"><hr className="w-full border-[#6a6a6a]" /></div>}
        {group.map(e => {
          const body = (
            <>
              <span className="flex w-[25px] shrink-0 items-center justify-center">
                {e.kind && (
                  <span className="relative size-[15px]">
                    <input
                      type={e.kind === 'radio' ? 'radio' : 'checkbox'}
                      name={e.kind === 'radio' ? 'shading' : undefined}
                      defaultChecked={e.on}
                      disabled={e.off}
                      className={`peer absolute inset-0 size-[15px] appearance-none bg-[#2b2b2b] ${e.kind === 'radio' ? 'rounded-full checked:border-4 checked:border-[#2b2b2b] checked:bg-white' : ''}`}
                    />
                    {e.kind === 'check' && <Tick />}
                  </span>
                )}
              </span>
              <span className={`flex h-[25px] flex-1 items-center pl-[5px] pr-[35px] ${e.active ? 'bg-[#5285a6]' : 'bg-[#525252]'} ${e.off ? 'text-[#7c7c7c]' : ''}`}>
                <span className="flex-1">{e.text}</span>
                {e.key}
                {e.box && <svg width="16" height="16" className="-mr-[29px]"><path d="M.5.500h15v15H.5z" fill="none" stroke={G} /><path d="M0 0h16v4H0z" fill={G} /></svg>}
              </span>
              {e.active && <span className="absolute -left-[3px] -top-[4px] h-[33px] w-[121px] rounded-sm border-4 border-[#ff2012]" />}
            </>
          );
          return e.kind
            ? <label key={e.text} className="relative flex">{body}</label>
            : <button key={e.text} className="relative flex w-full text-left">{body}</button>;
        })}
      </div>
    ))}
  </div>
);

const VBtn = ({ label, active, frame, children }: { label: string; active?: boolean; frame?: boolean; children: ReactNode }) => (
  <button
    aria-label={label}
    className={`flex h-[23px] w-6 shrink-0 items-center justify-center ${active ? 'bg-[#5285a6]' : ''} ${frame ? 'bg-[#3a3a3a]' : ''}`}
  >
    <Svg size={18} box={20}>{children}</Svg>
  </button>
);

const VSep = () => <span className="relative mx-[6px] h-5 w-px shrink-0 bg-[#777] before:absolute before:-left-px before:top-1 before:h-3 before:w-[3px] before:bg-[#999]" />;
const frameRect = <path d="M1 2h18v16H1z" stroke={G} strokeWidth="1.500" fill="#3a3a3a" />;
const isoCube = 'M10 0l9 5v10l-9 5-9-5V5z';

const ViewToolbar = () => (
  <div className="flex h-[25px] items-center pl-1">
    <span className="h-5 w-px bg-[#888]" />
    <button aria-label="Arnold" className="ml-[8px]"><svg width="20" height="19"><path d="M0 2l3-2v17l-3 2z" fill="#7cc4dd" /><path d="M3 0h17v18H3z" fill="#38a3cb" /><text x="11" y="13" fontSize="12" fontWeight="700" textAnchor="middle" fill="#fff">A</text></svg></button>
    <span className="ml-1 flex"><VBtn label="选择摄影机"><path d="M1 0v20M19 0v20M0 2h20M0 18h20" stroke={G} /><path d="M4 4h12v12H4z" fill={T} /></VBtn></span>
    <div className="w-[289px] shrink-0" />
    <VBtn label="胶片门">{frameRect}<path d="M2 5h16M2 15h16" stroke={G} strokeWidth="2" strokeDasharray="1 1" /></VBtn>
    <VBtn label="分辨率门">{frameRect}<circle cx="10" cy="10" r="5" fill={T} /></VBtn>
    <VBtn label="门遮罩" frame><path d="M1 2h18v16H1z" fill="#555" /><circle cx="10" cy="10" r="5" fill="#3f3f3f" /></VBtn>
    <VBtn label="区域图">{frameRect}<path d="M10 2v16M1 10h18" stroke={G} /><path d="M3 7h4v6H3zM13 7h4v6h-4zM8 4h4v3H8zM8 13h4v3H8z" fill={T} /></VBtn>
    <VBtn label="安全动作">{frameRect}<path d="M3 15l5-8 5 8z" fill={T} /><circle cx="13" cy="7" r="4" fill={T} /></VBtn>
    <VBtn label="安全标题">{frameRect}<text x="10" y="16" fontSize="17" fontWeight="700" textAnchor="middle" fill={T} className="font-['Liberation_Serif']">T</text></VBtn>
    <VSep />
    <VBtn label="线框"><path d={isoCube} stroke={G} /><path d="M1 5l18 10M19 5L1 15M10 0v20" stroke={G} /></VBtn>
    <VBtn label="平滑着色" active><path d={isoCube} fill={T} /><path d="M10 0l9 5-9 5-9-5z" fill="#86dce6" /><path d="M10 10v10l9-5V5z" fill="#5cc4d0" /></VBtn>
    <VBtn label="默认材质"><path d="M12 2A8.500 8.500 0 1 0 12 18z" fill={G} /><path d="M12 2h4v3h-4zM16 5h3v4h-3zM12 9h4v3h-4zM16 12h3v3h-3zM12 15h4v3h-4z" fill={G} /><path d="M8 5h4v4H8zM8 12h4v3H8z" fill={D} /></VBtn>
    <VBtn label="着色对象上的线框" active><path d={isoCube} fill={T} stroke="#d8c4b0" strokeWidth="1.500" /><path d="M1 5l9 5 9-5M10 10v10M5 8v10M15 8v10" stroke="#d8d8d8" /></VBtn>
    <VBtn label="带纹理"><path d="M6 1h4v4H6zM14 3h3v4h-3zM2 6h4v4H2zM10 6h4v4h-4zM6 10h4v4H6zM14 10h4v4h-4zM10 14h4v5h-4zM2 13h4v4H2z" fill={G} /></VBtn>
    <VBtn label="使用所有灯光"><circle cx="10" cy="8" r="5" fill={G} /><path d="M7 12h6v5H7z" fill={G} /><path d="M0 9h3M17 9h3M2 2l2 2M18 2l-2 2M2 16l2-2M18 16l-2-2" stroke={G} strokeWidth="1.500" /></VBtn>
    <VBtn label="阴影"><circle cx="13" cy="9" r="6" fill="#3f5f64" /><path d="M0 14l7-4 3 6-6 2z" fill="#555" /></VBtn>
    <VSep />
    <VBtn label="屏幕空间环境光遮挡"><circle cx="10" cy="7" r="6.500" fill={G} /><path d="M1 13l9 6 9-6M3 16l7-3 7 3" stroke={T} strokeWidth="1.500" strokeDasharray="2 1" /></VBtn>
    <VBtn label="运动模糊"><circle cx="6" cy="14" r="5" fill="#666" /><circle cx="9" cy="11" r="5" fill="#888" /><circle cx="13" cy="7" r="6" fill={G} /></VBtn>
    <VBtn label="多采样抗锯齿"><path d="M9 2a8 8 0 0 0 0 16" stroke={T} strokeWidth="2.500" /><path d="M11 2a8 8 0 0 1 0 16" stroke={G} strokeWidth="2.500" strokeDasharray="3 2" /></VBtn>
    <VBtn label="景深" frame><path d="M2 2h10v10H2z" fill="#3f4f53" /><path d="M8 7h10v11H8z" fill="#45595d" /></VBtn>
    <VSep />
    <VBtn label="隔离选择"><path d="M1 2h11v11H1z" stroke={T} strokeWidth="1.500" strokeDasharray="2 2" /><path d="M10 6l10 9h-4l2 4-2 1-2-4-3 2z" fill={G} /></VBtn>
    <VSep />
    <button aria-label="X 射线显示" className="flex size-[23px] shrink-0 items-center justify-center border-2 border-[#4f82a5] bg-[#333]"><Svg size={16} box={20}><path d="M7 1h12v12H7z" fill={G} /><path d="M1 6h12v13H1z" fill={G} stroke={D} /><path d="M7 6h6v7H7z" fill="#e4e4e4" stroke={D} /></Svg></button>
    <VBtn label="X 射线显示活动组件"><path d="M7 1h12v12H7z" stroke={G} strokeWidth="2" /><path d="M1 6h4v8h8v5H1z" fill={G} /><path d="M8 6h5v6H8z" fill={G} /></VBtn>
    <VBtn label="X 射线显示关节">{frameRect}<path d="M5 5l3 1 7 8-1 1-8-6z" fill={G} stroke={G} /></VBtn>
    <VSep />
    <button aria-label="曝光" className="mx-[6px]"><Svg size={16} box={20}><circle cx="10" cy="10" r="9" fill={G} /><circle cx="10" cy="10" r="3.500" fill={D} /><path d="M10 1l-4 8M19 9l-8-3M17 17l-3-8M8 19l5-6M1 11l7 3M3 4l3 7" stroke={D} strokeWidth="1.300" /></Svg></button>
    <input aria-label="曝光值" defaultValue="0.00" className="h-5 w-12 shrink-0 rounded-sm bg-[#2b2b2b] text-center outline-none" />
    <button aria-label="伽马" className="mx-[6px]"><Svg size={16} box={20}><path d="M9 2a8 8 0 0 0 0 16z" fill={G} /><path d="M11 2h8v16h-8q7-8 0-16z" fill={G} /></Svg></button>
    <input aria-label="伽马值" defaultValue="1.00" className="h-5 w-12 shrink-0 rounded-sm bg-[#2b2b2b] text-center outline-none" />
    <button aria-label="色彩管理" className="mx-[2px] flex h-[23px] w-6 shrink-0 items-center justify-center bg-[#5285a6]"><Svg size={18} box={18}><circle cx="9" cy="9" r="8" fill={T} stroke={D} /><text x="9" y="12" fontSize="7" fontWeight="700" textAnchor="middle" fill="#234">ON</text></Svg></button>
    <Select label="视图变换" value="ACES 1.0 SDR-video (sRGB)" className="h-[23px] w-[261px] text-base" />
  </div>
);

const Viewport = () => (
  <main className="mt-[2px] mb-[2px] flex min-w-0 flex-1 flex-col border border-[#7a7a7a]">
    <div className="flex h-[27px] items-center pl-[2px] text-[#bbb]">
      <button className="pl-[10px] pr-3">视图</button>
      <div className="relative">
        <button className="h-[26px] bg-[#5285a6] px-2">着色</button>
        <span className="pointer-events-none absolute -left-[4px] -top-[4px] z-30 h-[35px] w-[54px] rounded-sm border-4 border-[#ff2012]" />
        <ShadingMenu />
      </div>
      {['照明', '显示', '渲染器', '面板'].map(m => <button key={m} className="pl-3 pr-[9px]">{m}</button>)}
    </div>
    <ViewToolbar />
    <div className="relative flex-1 overflow-hidden bg-[#5c5c5c]">
      <Scene />
      <ViewCube />
      <div className="absolute left-[19px] top-[-5px] text-[13px] font-bold leading-[25px] text-white">
        {['顶点:', '边:', '面:', '三角形:', 'UV:'].map(t => <p key={t}>{t}</p>)}
      </div>
      <svg width="40" height="42" className="absolute bottom-[23px] left-[14px]" strokeWidth="1.300">
        <path d="M18 16v14" stroke="#2a9a2a" /><path d="M18 30l12 5" stroke="#b02020" /><path d="M18 30L7 36" stroke="#2020b0" />
        <text x="18" y="12" fontSize="12" fontWeight="700" textAnchor="middle" fill="#14d214">y</text>
        <text x="33" y="35" fontSize="12" fontWeight="700" textAnchor="middle" fill="#e01010">x</text>
        <text x="5" y="35" fontSize="12" fontWeight="700" textAnchor="middle" fill="#1010f0">z</text>
      </svg>
      <p className="absolute bottom-[8px] left-0 w-full pr-6 text-center text-[13px] font-bold leading-5 text-white">persp</p>
    </div>
  </main>
);

/* ---------- modeling toolkit ---------- */
const sections: { title: string; items: [string, ShapeName][] }[] = [
  { title: '网格', items: [['结合', 'combine'], ['分离', 'separate'], ['平滑', 'smoothSmall'], ['布尔', 'booleanSmall']] },
  { title: '组件', items: [['挤出', 'extrude'], ['倒角', 'bevel'], ['桥接', 'bridge'], ['添加分段', 'addDivision']] },
  { title: '工具', items: [['多切割', 'multiCut'], ['目标焊接', 'targetWeld'], ['连接', 'connect'], ['四边形绘制', 'quadDraw']] },
];

const Constraint = ({ label, extra }: { label: string; extra?: string }) => (
  <label className="ml-3 flex items-center text-[#aaa]">
    {label}
    <span className="ml-[9px] mr-2"><Down w={8} color="#999" /></span>
    <input readOnly value="禁用" className="h-[29px] min-w-0 flex-1 rounded-sm bg-[#404040] px-2 outline-none" />
    {extra && <input aria-label={`${label}值`} readOnly value={extra} className="ml-[2px] h-[29px] w-[94px] rounded-sm bg-[#404040] px-2 text-[#666] outline-none" />}
  </label>
);

const Toolkit = () => (
  <aside className="ml-1 flex w-[326px] shrink-0 flex-col bg-[#444]">
    <div className="flex h-[31px] shrink-0 items-center gap-[21px] pl-[13px] text-[#bbb]"><button>对象</button><button>帮助</button></div>
    <div className="flex min-h-0 flex-1 basis-0">
      <div className="flex min-w-0 flex-1 flex-col overflow-hidden pl-[5px] pr-[2px]">
        <button className="mx-auto mt-3 h-[33px] w-[165px] shrink-0 bg-[#5d5d5d] text-white">多组件</button>
        <div className="ml-[14px] mt-[5px] flex shrink-0 gap-px">
          {[
            <g key="o"><path d="M18 0l16 9v18l-16 9-16-9V9z" fill={O} /><path d="M2 9l16 9 16-9M18 18v18" stroke={D} /></g>,
            <g key="v"><path d="M5 5h26v26H5z" stroke={G} /><path d="M2 2h6v6H2zM28 2h6v6h-6zM2 28h6v6H2zM28 28h6v6h-6z" fill={D} stroke={O} strokeWidth="1.500" /></g>,
            <g key="e"><path d="M35 18L18 35 1 18 18 1" stroke={G} strokeWidth="1.500" /><path d="M18 1l17 17" stroke={O} strokeWidth="1.500" /></g>,
            <g key="f"><path d="M18 0l16 9v18l-16 9-16-9V9z" fill={G} /><path d="M18 18l16-9v18l-16 9z" fill={O} /><path d="M2 9l16 9 16-9M18 18v18" stroke={D} /></g>,
            <g key="u"><path d="M5 5h26v26H5z" stroke={G} /><path d="M2 2h6v6H2zM28 2h6v6h-6zM2 28h6v6H2zM28 28h6v6h-6z" fill={D} stroke={O} strokeWidth="1.500" /><path d="M10 10h5v5h-5zM20 10h6v5h-6zM15 15h5v6h-5zM10 21h5v5h-5zM20 21h6v5h-6z" fill={G} /></g>,
          ].map((icon, i) => (
            <button key={i} aria-label={`组件模式 ${i + 1}`} className={`flex h-[45px] w-[54px] items-center justify-center ${i === 0 ? 'bg-[#5285a6]' : ''}`}><Svg size={36} box={36}>{icon}</Svg></button>
          ))}
        </div>
        <div className="ml-[11px] mt-[46px] flex flex-col text-[#bbb]">
          {['拾取/框选', '拖选', '调整/框选'].map((t, i) => (
            <label key={t} className="flex h-[26px] items-center">
              <input type="radio" name="pick" defaultChecked={i === 0} className="mr-[9px] size-[13px] appearance-none rounded-full border border-[#333] bg-[#2b2b2b] checked:bg-[#d0d0d0]" />{t}
            </label>
          ))}
          {['亮显背面', '亮显最近组件'].map(t => (
            <label key={t} className="ml-[6px] mt-px flex h-[26px] items-center">
              <span className="relative mr-[6px] size-4"><input type="checkbox" defaultChecked className="peer absolute inset-0 size-4 appearance-none bg-[#2b2b2b]" /><Tick /></span>{t}
            </label>
          ))}
        </div>
        <div className="mr-[5px] mt-[13px] flex flex-col gap-2">
          <Constraint label="基于摄影机的选择" />
          <Constraint label="对称" />
          <Constraint label="选择约束" extra="0" />
          <Constraint label="变换约束" />
        </div>
        <button className="ml-3 mr-1 mt-[11px] flex h-[26px] shrink-0 items-center bg-[#3b3b3b] pl-[13px] font-bold">
          <svg width="7" height="12" className="mr-[15px]"><path d="M0 0v12l7-6z" fill="#fff" /></svg>软选择
        </button>
        {sections.map(s => (
          <section key={s.title} className="ml-1 mr-1 mt-[11px]">
            <button className="flex h-[25px] w-full items-center bg-[#3b3b3b] pl-[9px] font-bold"><span className="mr-[13px]"><Down w={13} color="#fff" /></span>{s.title}</button>
            <div className="mt-1 grid grid-cols-2 gap-x-[2px] gap-y-[3px]">
              {s.items.map(([t, icon]) => (
                <button key={t} className="flex h-[34px] items-center bg-[#5d5d5d] pl-[6px] text-[#e4e4e4]"><Svg size={23}>{shapes[icon]}</Svg><span className="ml-2">{t}</span></button>
              ))}
            </div>
          </section>
        ))}
        <button className="mt-3 flex h-[26px] shrink-0 items-center bg-[#3b3b3b] pl-[9px] font-bold"><span className="mr-[13px]"><Down w={13} color="#fff" /></span>移动设置</button>
        <div className="ml-[3px] mt-1 flex items-start bg-[#484848] pr-[5px]">
          <span className="mx-2 mt-[15px]"><Down w={8} color="#999" /></span>
          <input aria-label="轴方向" readOnly value="世界" className="ml-1 mt-2 h-8 w-[123px] bg-[#404040] px-2 outline-none" />
          <span className="ml-[11px] mt-[2px] h-14 w-[19px] bg-[#5d5d5d]" />
          <div className="ml-1 mt-[2px] flex min-w-0 flex-1 flex-col gap-[2px] font-bold text-black">
            <label className="flex gap-1"><span className="h-7 w-[25px] bg-[#fb4444] text-center leading-7">X:</span><input readOnly value="0.00" className="h-7 min-w-0 flex-1 bg-[#404040] px-2 font-normal text-[#666] outline-none" /></label>
            <label className="flex gap-1"><span className="h-7 w-[25px] bg-[#44fb84] text-center leading-7">Y:</span><input readOnly value="0.00" className="h-7 min-w-0 flex-1 bg-[#404040] px-2 font-normal text-[#666] outline-none" /></label>
          </div>
        </div>
      </div>
      <div className="mr-[3px] flex w-[14px] flex-col items-center gap-[5px] bg-[#373737] py-[5px]">
        <svg width="11" height="6"><path d="M0 6h11L5.500 0z" fill={G} /></svg>
        <span className="w-full flex-1 rounded-md bg-[#5d5d5d]" />
        <svg width="11" height="6" className="mt-[72px]"><path d="M0 0h11L5.500 6z" fill={G} /></svg>
      </div>
    </div>
    <div className="mx-auto mb-1 mt-[2px] h-[5px] w-[108px] bg-[radial-gradient(#888_1px,transparent_1px)] bg-[size:5px_5px]" />
  </aside>
);

const SideTabs = () => (
  <div className="flex w-[23px] shrink-0 flex-col gap-[2px] bg-[#373737] pt-[2px] text-[#8a8a8a]">
    {[['通道盒/层编辑器', 'h-[139px]'], ['属性编辑器', 'h-[101px]'], ['建模工具包', 'h-[103px] bg-[#444] text-[#eee]']].map(([t, cls]) => (
      <button key={t} className={`flex w-full items-center justify-center border-y border-[#333] [writing-mode:vertical-rl] [text-orientation:sideways] ${cls}`}>{t}</button>
    ))}
  </div>
);

/* ---------- time ---------- */
const transport = [
  ['转至开头', <path key="a" d="M1 3h2v20H1zM12 4v18l-8-9zM21 4v18l-8-9z" fill={G} />],
  ['后退一帧', <path key="b" d="M5 3h2v20H5zM20 3v20L8 13z" fill={G} />],
  ['后退一关键帧', <g key="c"><path d="M19 3v20L9 13z" fill={G} /><path d="M4 3h4v20H4z" fill="#db7a42" /></g>],
  ['向后播放', <path key="d" d="M19 2v22L5 13z" fill={G} />],
  ['向前播放', <path key="e" d="M5 2v22l14-11z" fill={G} />],
  ['前进一关键帧', <g key="f"><path d="M5 3v20l10-10z" fill={G} /><path d="M16 3h4v20h-4z" fill="#db7a42" /></g>],
  ['前进一帧', <path key="g" d="M4 3v20l12-10zM17 3h2v20h-2z" fill={G} />],
  ['转至结尾', <path key="h" d="M3 4v18l8-9zM12 4v18l8-9zM21 3h2v20h-2z" fill={G} />],
] as [string, ReactNode][];

const TimeSlider = () => (
  <section className="flex h-[64px] shrink-0 items-start border-t-4 border-[#373737]">
    <Grip />
    <div className="ml-[11px] flex-1">
      <div className="flex bg-[linear-gradient(#444_10px,#2b2b2b_10px,#2b2b2b_50px,#5d5d5d_50px,#5d5d5d_53px,#444_53px)] px-[10px]">
        {Array.from({ length: 31 }, (_, i) => (
          <div key={i} className={`flex h-[60px] min-w-0 flex-1 flex-col text-[#8a8a8a] ${i === 0 ? 'bg-white/15' : ''}`}>
            <span className="h-[10px] w-px bg-[#222]" />
            <span className="h-5 pl-[10px] leading-[18px]">{i}</span>
            <span className="relative flex h-5 w-px bg-[#777]">
              {i === 0 && <b className="absolute -top-[2px] left-[5px] rounded-sm bg-[#2b2b2b] px-1 font-normal leading-[17px] text-white">0</b>}
            </span>
            <span className="h-[10px] w-px bg-[#222]" />
          </div>
        ))}
      </div>
    </div>
    <input aria-label="当前帧" defaultValue="0" className="ml-[11px] mt-4 h-[27px] w-[74px] rounded-sm bg-[#2b2b2b] px-2 outline-none" />
    <div className="ml-1 mt-[17px] flex">
      {transport.map(([label, icon]) => <button key={label} aria-label={label} className="flex w-10 justify-center"><Svg size={24} box={26}>{icon}</Svg></button>)}
    </div>
  </section>
);

const RangeSlider = () => (
  <section className="flex h-[48px] shrink-0 items-center border-t-[3px] border-[#373737]">
    <Grip />
    <input aria-label="动画开始时间" defaultValue="0" className="ml-3 h-[27px] w-[73px] rounded-sm bg-[#2b2b2b] px-2 outline-none" />
    <div className="ml-[11px] flex h-6 flex-1 items-center justify-between rounded-sm border-[3px] border-[#2b2b2b] bg-[#444] text-[#ccc]">
      <span className="flex items-center gap-[10px]"><i className="h-[18px] w-[9px] bg-[#999]" />0</span>
      <span className="h-[10px] w-2 bg-[radial-gradient(#888_1px,transparent_1px)] bg-[size:4px_4px]" />
      <span className="flex items-center gap-[10px]">30<i className="h-[18px] w-[9px] bg-[#999]" /></span>
    </div>
    <input aria-label="动画结束时间" defaultValue="30" className="ml-3 h-[27px] w-[73px] rounded-sm bg-[#2b2b2b] px-2 outline-none" />
    <span className="ml-[14px] flex"><Sep /></span>
    <button aria-label="书签" className="ml-[21px] mr-4"><svg width="18" height="24"><path d="M1 2h9v5h5v15l-6-6-8 6z" fill="#db6e3c" /><path d="M13 0v10M8 5h10" stroke={G} strokeWidth="2" /></svg></button>
    <Sep />
    <span className="ml-5 mr-[9px]"><Down w={11} color="#777" /></span>
    <input aria-label="角色集" readOnly value="无角色集" className="h-[27px] w-[128px] rounded-sm border border-[#4c4c4c] bg-[#434343] px-[6px] outline-none" />
    <span className="ml-[17px] mr-[9px]"><Down w={11} color="#777" /></span>
    <input aria-label="动画层" readOnly value="无动画层" className="h-[27px] w-[128px] rounded-sm border border-[#4c4c4c] bg-[#434343] px-[6px] outline-none" />
    <span className="ml-4 mr-4 flex"><Sep /></span>
    <Select label="帧速率" value="24 fps" className="h-6 w-[118px]" />
    <button aria-label="循环" className="ml-[22px]"><Svg size={22} box={24}><path d="M5 18Q1 17 1 12t6-6h10M19 6q4 1 4 6t-6 6H7" stroke={G} strokeWidth="2.600" /><path d="M15 1l6 5-6 5zM9 13l-6 5 6 5z" fill={G} /></Svg></button>
    <button aria-label="缓存播放" className="ml-[19px] flex size-[29px] items-center justify-center bg-[#5285a6]"><Svg size={24} box={24}><path d="M2 4h20v18H2z" fill={D} /><path d="M2 6h20M2 20h20" stroke={O} strokeWidth="2" strokeDasharray="2 1" /><path d="M3 9h5v9H3zM9 9h6v9H9zM16 9h5v9h-5zM13 1l8 5-8 5z" fill={G} /></Svg></button>
    <span className="ml-[13px] flex"><Sep /></span>
    <button aria-label="音频" className="ml-[15px]"><Svg size={24} box={24}><path d="M1 8h5l6-6v20l-6-6H1z" fill={G} /><path d="M15 8q3 4 0 8M18 5q5 7 0 14" stroke={G} strokeWidth="2" /></Svg></button>
    <button aria-label="自动关键帧" className="ml-[19px]"><Svg size={22} box={24}><path d="M3 9Q5 2 12 2t9 6M21 15q-2 7-9 7t-9-6" stroke={G} strokeWidth="2" /><path d="M22 3v6h-6zM2 21v-6h6z" fill={G} /><path d="M10 5h4v14h-4z" fill="#db7a42" /><path d="M4 12h3M17 12h3" stroke="#db7a42" strokeWidth="2" /></Svg></button>
    <button aria-label="首选项" className="ml-[17px] mr-[9px]"><Svg size={24} box={24}><circle cx="6" cy="6" r="4" stroke={G} strokeWidth="2.500" strokeDasharray="2.200 1" /><circle cx="18" cy="6" r="2.500" fill="#db7a42" /><path d="M10 11l6-2 2 5 5 1M15 10l-2 6 5 3v5M13 16l-3 4H6" stroke="#db7a42" strokeWidth="2.500" /></Svg></button>
  </section>
);

export default function App() {
  return (
    <div className="relative flex h-screen min-w-[2000px] flex-col overflow-hidden border-b-2 border-[#a0a0aa] bg-[#444] font-['Open_Sans','Noto_Sans_CJK_SC',sans-serif] text-[15px] leading-5 text-[#c8c8c8] [&_button]:whitespace-nowrap [&_label]:whitespace-nowrap">
      <TitleBar />
      <MenuBar />
      <StatusLine />
      <Shelf />
      <div className="flex min-h-0 flex-1">
        <ToolBox />
        <Outliner />
        <div className="flex min-w-0 flex-1 bg-[#373737] pl-[2px]">
          <Viewport />
          <Toolkit />
          <SideTabs />
        </div>
      </div>
      <TimeSlider />
      <RangeSlider />
      <footer className="flex h-[48px] shrink-0 items-center border-t-[3px] border-[#373737]">
        <Grip />
        <button aria-label="帮助" className="ml-[11px] flex size-5 items-center justify-center rounded-full bg-[#8a8a8a] font-bold text-[#444]">?</button>
      </footer>
      <p className="absolute bottom-[12px] right-[5px] text-[42px] leading-[48px] font-light text-[#cfcfcf] [text-shadow:1px_2px_1px_#222]">CSDN @雪下的新火</p>
    </div>
  );
}
